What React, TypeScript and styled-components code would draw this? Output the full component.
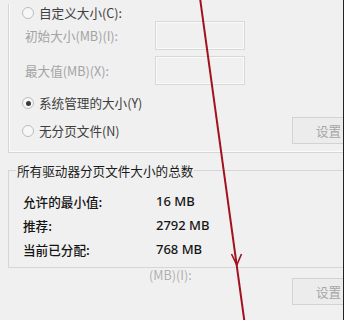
import React from "react";
import styled, { createGlobalStyle } from "styled-components";

const Global = createGlobalStyle`
  html, body { margin: 0; padding: 0; background: #f0f0f0; }
  body { font-family: "Noto Sans CJK SC", "Noto Sans", sans-serif; }
`;

const Frame = styled.div`
  position: relative;
  width: 343px;
  height: 319px;
  overflow: hidden;
  background: #f0f0f0;
  border-right: 1px solid #222;
  border-bottom: 1px solid #1a1a1a;
  display: flex;
  flex-direction: column;
  padding-top: 4px;
  box-sizing: content-box;
  font-size: 12.6px;
`;

const TopGroup = styled.div`
  margin-left: 8px;
  margin-right: -40px;
  border-left: 1px solid #d6d6d6;
  border-bottom: 1px solid #d6d6d6;
  box-shadow: inset 1px -1px 0 #fbfbfb;
  padding-bottom: 8px;
  display: flex;
  flex-direction: column;
`;

const RadioRow = styled.div<{ $h: number; $mt?: number }>`
  display: flex;
  align-items: center;
  height: ${(p) => p.$h}px;
  margin-top: ${(p) => p.$mt ?? 0}px;
  padding-left: 13px;
`;

const Radio = styled.span<{ $on?: boolean }>`
  width: 10px;
  height: 10px;
  border-radius: 50%;
  border: 1px solid #bcbcbc;
  background: #f7f7f7;
  display: flex;
  align-items: center;
  justify-content: center;
  margin-right: 5px;
  flex: none;
  &::after {
    content: "";
    width: 5px;
    height: 5px;
    border-radius: 50%;
    background: ${(p) => (p.$on ? "#3a3a3a" : "transparent")};
  }
`;

const RadioLabel = styled.span`
  color: #3e3e3e;
  line-height: 16px;
`;

const FieldRow = styled.div<{ $mt?: number }>`
  display: flex;
  align-items: center;
  height: 29px;
  margin-top: ${(p) => p.$mt ?? 0}px;
  padding-left: 16px;
`;

const FieldLabel = styled.span`
  width: 130px;
  color: #a3a3a3;
  line-height: 16px;
`;

const Input = styled.div`
  width: 88px;
  height: 27px;
  border: 1px solid #d8d8d8;
  box-shadow: inset 0 0 0 1px #fafafa;
  background: #f0f0f0;
`;

const Button = styled.div<{ $mt?: number }>`
  margin-left: auto;
  margin-right: 14px;
  margin-top: ${(p) => p.$mt ?? 0}px;
  width: 52px;
  height: 25px;
  border: 1px solid #d3d3d3;
  background: #ececec;
  color: #a6a6a6;
  display: flex;
  align-items: center;
  padding-left: 23px;
  box-sizing: content-box;
  flex: none;
`;

const LastRow = styled.div`
  display: flex;
  align-items: center;
  height: 27px;
  margin-top: 5px;
  padding-left: 13px;
`;

const Totals = styled.fieldset`
  margin: 9px -40px 0 8px;
  padding: 0 0 6px 7px;
  border: 1px solid #d6d6d6;
  border-right: none;
  min-width: 0;
`;

const Legend = styled.legend`
  padding: 0 1px;
  color: #1c1c1c;
  line-height: 17px;
`;

const StatGrid = styled.div`
  display: grid;
  grid-template-columns: 133px auto;
  grid-auto-rows: 24px;
  align-items: center;
  margin-top: 10px;
  padding-left: 7px;
  color: #151515;
  font-weight: 500;
`;

const StatValue = styled.span`
  font-family: "Noto Sans", "Noto Sans CJK SC", sans-serif;
  font-size: 13px;
`;

const LowerRow = styled.div`
  display: flex;
  align-items: flex-start;
  margin-right: -40px;
`;

const Ghost = styled.span`
  margin-left: 149px;
  color: #b0b0b0;
  line-height: 14px;
`;

const Overlay = styled.svg`
  position: absolute;
  left: 0;
  top: 0;
  pointer-events: none;
`;

export default function App() {
  return (
    <>
      <Global />
      <Frame>
        <TopGroup>
          <RadioRow $h={17}>
            <Radio />
            <RadioLabel>自定义大小(C):</RadioLabel>
          </RadioRow>
          <FieldRow>
            <FieldLabel>初始大小(MB)(I):</FieldLabel>
            <Input />
          </FieldRow>
          <FieldRow $mt={6}>
            <FieldLabel>最大值(MB)(X):</FieldLabel>
            <Input />
          </FieldRow>
          <RadioRow $h={18} $mt={9}>
            <Radio $on />
            <RadioLabel>系统管理的大小(Y)</RadioLabel>
          </RadioRow>
          <LastRow>
            <Radio />
            <RadioLabel>无分页文件(N)</RadioLabel>
            <Button>设置</Button>
          </LastRow>
        </TopGroup>
        <Totals>
          <Legend>所有驱动器分页文件大小的总数</Legend>
          <StatGrid>
            <span>允许的最小值:</span>
            <StatValue>16 MB</StatValue>
            <span>推荐:</span>
            <StatValue>2792 MB</StatValue>
            <span>当前已分配:</span>
            <StatValue>768 MB</StatValue>
          </StatGrid>
        </Totals>
        <LowerRow>
          <Ghost>(MB)(I):</Ghost>
          <Button $mt={10}>设置</Button>
        </LowerRow>
        <Overlay width="344" height="320" viewBox="0 0 344 320">
          <line x1="200" y1="-2" x2="244.5" y2="322" stroke="#a3111d" strokeWidth="2" />
          <polyline
            points="231.5,254 236.8,265 241.5,254"
            fill="none"
            stroke="#a3111d"
            strokeWidth="1.6"
          />
        </Overlay>
      </Frame>
    </>
  );
}
